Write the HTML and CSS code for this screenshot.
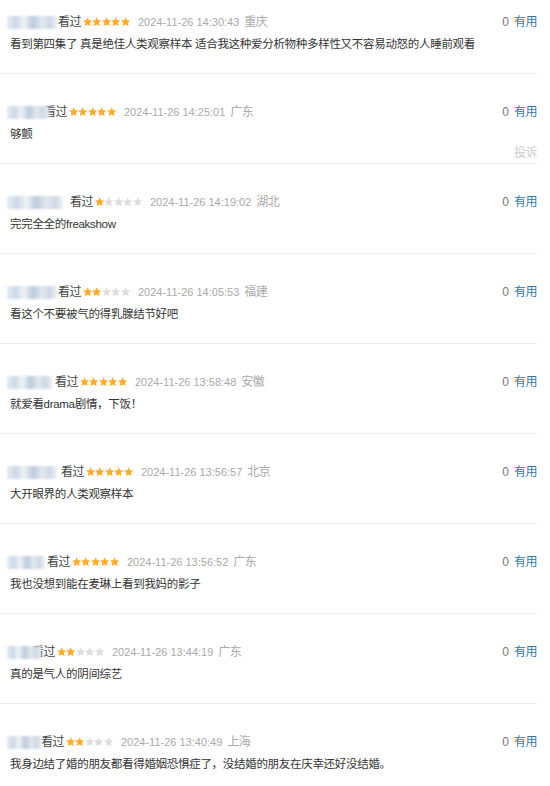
FILE: index.html
```html
<!DOCTYPE html>
<html lang="zh-CN">
<head>
    <meta charset="UTF-8">
    <meta name="viewport" content="width=device-width, initial-scale=1.0">
    <title>短评</title>
    <link rel="stylesheet" href="styles.css">
</head>
<body>
<svg class="defs" width="0" height="0">
    <symbol id="star" viewBox="0.3 0.3 9.4 9.3">
        <path d="M5 0.4 L6.4 3.4 L9.65 3.75 L7.25 5.95 L7.9 9.35 L5 7.7 L2.1 9.35 L2.75 5.95 L0.35 3.75 L3.6 3.4 Z"/>
    </symbol>
</svg>

<div class="comments">

    <!-- 1 -->
    <div class="comment">
        <div class="comment-info">
            <div class="meta">
                <span class="name" style="--w:50px; --m:1px"></span>
                <span class="watched">看过</span>
                <span class="stars">
                    <svg class="on"><use href="#star"/></svg><svg class="on"><use href="#star"/></svg><svg class="on"><use href="#star"/></svg><svg class="on"><use href="#star"/></svg><svg class="on"><use href="#star"/></svg>
                </span>
                <span class="time">2024-11-26 14:30:43</span>
                <span class="loc">重庆</span>
            </div>
            <div class="votes"><span class="count">0</span><a class="useful">有用</a></div>
        </div>
        <p class="short">看到第四集了 真是绝佳人类观察样本 适合我这种爱分析物种多样性又不容易动怒的人睡前观看</p>
    </div>

    <!-- 2 -->
    <div class="comment has-report">
        <div class="comment-info">
            <div class="meta">
                <span class="name" style="--w:42px; --m:-5px"></span>
                <span class="watched">看过</span>
                <span class="stars">
                    <svg class="on"><use href="#star"/></svg><svg class="on"><use href="#star"/></svg><svg class="on"><use href="#star"/></svg><svg class="on"><use href="#star"/></svg><svg class="on"><use href="#star"/></svg>
                </span>
                <span class="time">2024-11-26 14:25:01</span>
                <span class="loc">广东</span>
            </div>
            <div class="votes"><span class="count">0</span><a class="useful">有用</a></div>
        </div>
        <p class="short">够颤</p>
        <div class="report">投诉</div>
    </div>

    <!-- 3 -->
    <div class="comment">
        <div class="comment-info">
            <div class="meta">
                <span class="name" style="--w:56px; --m:7px"></span>
                <span class="watched">看过</span>
                <span class="stars">
                    <svg class="on"><use href="#star"/></svg><svg><use href="#star"/></svg><svg><use href="#star"/></svg><svg><use href="#star"/></svg><svg><use href="#star"/></svg>
                </span>
                <span class="time">2024-11-26 14:19:02</span>
                <span class="loc">湖北</span>
            </div>
            <div class="votes"><span class="count">0</span><a class="useful">有用</a></div>
        </div>
        <p class="short">完完全全的freakshow</p>
    </div>

    <!-- 4 -->
    <div class="comment">
        <div class="comment-info">
            <div class="meta">
                <span class="name" style="--w:50px; --m:1px"></span>
                <span class="watched">看过</span>
                <span class="stars">
                    <svg class="on"><use href="#star"/></svg><svg class="on"><use href="#star"/></svg><svg><use href="#star"/></svg><svg><use href="#star"/></svg><svg><use href="#star"/></svg>
                </span>
                <span class="time">2024-11-26 14:05:53</span>
                <span class="loc">福建</span>
            </div>
            <div class="votes"><span class="count">0</span><a class="useful">有用</a></div>
        </div>
        <p class="short">看这个不要被气的得乳腺结节好吧</p>
    </div>

    <!-- 5 -->
    <div class="comment">
        <div class="comment-info">
            <div class="meta">
                <span class="name" style="--w:45px; --m:3px"></span>
                <span class="watched">看过</span>
                <span class="stars">
                    <svg class="on"><use href="#star"/></svg><svg class="on"><use href="#star"/></svg><svg class="on"><use href="#star"/></svg><svg class="on"><use href="#star"/></svg><svg class="on"><use href="#star"/></svg>
                </span>
                <span class="time">2024-11-26 13:58:48</span>
                <span class="loc">安徽</span>
            </div>
            <div class="votes"><span class="count">0</span><a class="useful">有用</a></div>
        </div>
        <p class="short">就爱看drama剧情，下饭！</p>
    </div>

    <!-- 6 -->
    <div class="comment">
        <div class="comment-info">
            <div class="meta">
                <span class="name" style="--w:50px; --m:4px"></span>
                <span class="watched">看过</span>
                <span class="stars">
                    <svg class="on"><use href="#star"/></svg><svg class="on"><use href="#star"/></svg><svg class="on"><use href="#star"/></svg><svg class="on"><use href="#star"/></svg><svg class="on"><use href="#star"/></svg>
                </span>
                <span class="time">2024-11-26 13:56:57</span>
                <span class="loc">北京</span>
            </div>
            <div class="votes"><span class="count">0</span><a class="useful">有用</a></div>
        </div>
        <p class="short">大开眼界的人类观察样本</p>
    </div>

    <!-- 7 -->
    <div class="comment">
        <div class="comment-info">
            <div class="meta">
                <span class="name" style="--w:38px; --m:2px"></span>
                <span class="watched">看过</span>
                <span class="stars">
                    <svg class="on"><use href="#star"/></svg><svg class="on"><use href="#star"/></svg><svg class="on"><use href="#star"/></svg><svg class="on"><use href="#star"/></svg><svg class="on"><use href="#star"/></svg>
                </span>
                <span class="time">2024-11-26 13:56:52</span>
                <span class="loc">广东</span>
            </div>
            <div class="votes"><span class="count">0</span><a class="useful">有用</a></div>
        </div>
        <p class="short">我也没想到能在麦琳上看到我妈的影子</p>
    </div>

    <!-- 8 -->
    <div class="comment">
        <div class="comment-info">
            <div class="meta">
                <span class="name" style="--w:34px; --m:-9px"></span>
                <span class="watched">看过</span>
                <span class="stars">
                    <svg class="on"><use href="#star"/></svg><svg class="on"><use href="#star"/></svg><svg><use href="#star"/></svg><svg><use href="#star"/></svg><svg><use href="#star"/></svg>
                </span>
                <span class="time">2024-11-26 13:44:19</span>
                <span class="loc">广东</span>
            </div>
            <div class="votes"><span class="count">0</span><a class="useful">有用</a></div>
        </div>
        <p class="short">真的是气人的阴间综艺</p>
    </div>

    <!-- 9 -->
    <div class="comment">
        <div class="comment-info">
            <div class="meta">
                <span class="name" style="--w:35px; --m:-1px"></span>
                <span class="watched">看过</span>
                <span class="stars">
                    <svg class="on"><use href="#star"/></svg><svg class="on"><use href="#star"/></svg><svg><use href="#star"/></svg><svg><use href="#star"/></svg><svg><use href="#star"/></svg>
                </span>
                <span class="time">2024-11-26 13:40:49</span>
                <span class="loc">上海</span>
            </div>
            <div class="votes"><span class="count">0</span><a class="useful">有用</a></div>
        </div>
        <p class="short">我身边结了婚的朋友都看得婚姻恐惧症了，没结婚的朋友在庆幸还好没结婚。</p>
    </div>

</div>
</body>
</html>
```

FILE: styles.css
```css
body {
    margin: 0;
    background-color: #ffffff;
    font-family: "Liberation Sans", "Noto Sans CJK SC", sans-serif;
    color: #333;
}
.defs {
    position: absolute;
}
.comments {
    width: 537px;
}

.comment {
    padding: 29px 0 19px 0;
    border-bottom: 1px solid #ebebeb;
}
.comment:first-child {
    padding-top: 13px;
}
.comment.has-report {
    padding-bottom: 3px;
}
.comment-info {
    display: flex;
    justify-content: space-between;
    align-items: center;
    height: 18px;
    font-size: 12px;
    letter-spacing: -0.5px;
    line-height: 18px;
}
.meta {
    display: flex;
    align-items: center;
}
.name {
    position: relative;
    z-index: 1;
    width: var(--w);
    height: 13px;
    margin-left: 7px;
    margin-right: var(--m);
    background: linear-gradient(90deg, #e6ecf2 0%, #cdd8e5 18%, #f0f3f7 34%, #bccbdd 52%, #e2e8ef 70%, #ced8e4 86%, #f0f2f5 100%);
    filter: blur(1.2px);
}
.watched {
    color: #444;
    margin-right: 2px;
}
.stars {
    display: flex;
    margin-right: 8px;
}
.stars svg {
    width: 9.4px;
    height: 9.4px;
    fill: #dedede;
}
.stars svg.on {
    fill: #ffac2d;
}
.time {
    color: #aaa;
    font-size: 11px;
    letter-spacing: 0;
}
.loc {
    color: #aaa;
    margin-left: 5px;
}
.votes {
    display: flex;
    gap: 5px;
    letter-spacing: 0;
}
.count {
    color: #777;
}
.useful {
    color: #37a;
    letter-spacing: -0.5px;
    cursor: pointer;
}

.short {
    margin: 3px 0 0 10px;
    font-size: 11.5px;
    letter-spacing: -0.3px;
    line-height: 20px;
    color: #333;
}
.report {
    margin-top: 2px;
    font-size: 12px;
    letter-spacing: -0.5px;
    line-height: 14px;
    color: #ccc;
    text-align: right;
}
```
